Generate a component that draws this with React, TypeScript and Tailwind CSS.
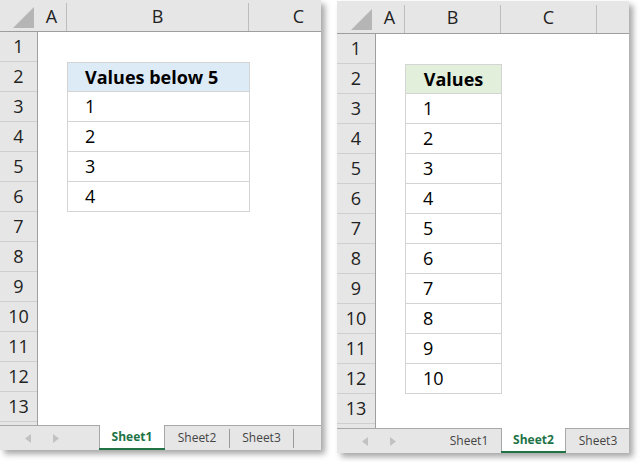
import React from 'react';

type Col = { label: string; w: number };

interface SheetProps {
  width: number;
  height: number;
  cornerW: number;
  headerH: number;
  cols: Col[];
  table: { colIndex: number; header: string; center: boolean; values: string[]; headBg: string };
  leftBarW: number;
  active: number;
  tabWidths: number[];
  leadSeparator: boolean;
  className?: string;
}

const font = { fontFamily: '"Open Sans", "Noto Sans", sans-serif' };

function Triangle({ dir }: { dir: 'l' | 'r' }) {
  return (
    <svg width="6" height="9" viewBox="0 0 6 9">
      {dir === 'l' ? <polygon points="6,0 6,9 0,4.5" fill="#c2c2c2" /> : <polygon points="0,0 0,9 6,4.5" fill="#c2c2c2" />}
    </svg>
  );
}

function Sheet({ width, height, cornerW, headerH, cols, table, leftBarW, active, tabWidths, leadSeparator, className }: SheetProps) {
  const rows = Array.from({ length: 13 }, (_, i) => i + 1);
  const offsetBefore = cols.slice(0, table.colIndex).reduce((s, c) => s + c.w, 0);
  const tableW = cols[table.colIndex].w;

  return (
    <div
      className={`flex flex-col shrink-0 bg-white overflow-hidden shadow-[4px_4px_6px_rgba(0,0,0,0.35)] ${className ?? ''}`}
      style={{ width, height, ...font }}
    >
      {/* column header */}
      <div className="flex shrink-0 bg-[#e6e6e6] border-b border-[#9e9e9e]" style={{ height: headerH }}>
        <div className="shrink-0 flex items-end justify-end pr-[3px] pb-[3px]" style={{ width: cornerW }}>
          <svg width="21" height="21" viewBox="0 0 21 21">
            <polygon points="21,0 21,21 0,21" fill="#b5b5b5" />
          </svg>
        </div>
        <div className="w-px self-end h-[28px] bg-[#a8a8a8]" />
        {cols.map((c) => (
          <React.Fragment key={c.label}>
            <div className="shrink-0 flex items-center justify-center text-[18px] text-[#222] pt-[1px]" style={{ width: c.w - 1 }}>
              {c.label}
            </div>
            <div className="w-px shrink-0 self-end h-[28px] bg-[#bdbdbd]" />
          </React.Fragment>
        ))}
      </div>

      {/* body */}
      <div className="flex flex-1 min-h-0">
        <div className="shrink-0 bg-[#e6e6e6] border-r border-[#9e9e9e] flex flex-col" style={{ width: cornerW + 1 }}>
          {rows.map((r) => (
            <div key={r} className="h-[30px] shrink-0 flex items-center justify-center text-[18px] text-[#222] border-b border-[#cfcfcf]">
              {r}
            </div>
          ))}
        </div>
        <div className="flex-1 flex flex-col">
          {rows.map((r) => {
            const idx = r - 2;
            const inTable = idx >= 0 && idx <= table.values.length;
            return (
              <div key={r} className="h-[30px] shrink-0 flex">
                <div className="shrink-0" style={{ width: offsetBefore }} />
                {inTable && (
                  <div
                    className={`shrink-0 flex items-center border-x border-[#d4d4d4] ${idx === 0 ? 'border-t font-bold' : ''} border-b text-[18px] text-black ${
                      idx === 0 && table.center ? 'justify-center' : 'pl-[17px]'
                    }`}
                    style={{ width: tableW + 1, backgroundColor: idx === 0 ? table.headBg : '#ffffff', marginLeft: -1 }}
                  >
                    {idx === 0 ? table.header : table.values[idx - 1]}
                  </div>
                )}
              </div>
            );
          })}
        </div>
      </div>

      {/* sheet tabs */}
      <div className="flex shrink-0 h-[25px] bg-[#e6e6e6] border-t border-[#a8a8a8] text-[12px]">
        <div className="shrink-0 flex items-center gap-[22px] pl-[25px]" style={{ width: leftBarW }}>
          <Triangle dir="l" />
          <Triangle dir="r" />
        </div>
        {leadSeparator && <div className="w-px h-[19px] mt-[3px] bg-[#9a9a9a]" />}
        {tabWidths.map((w, i) => {
          const isActive = i === active;
          const nextActive = i + 1 === active;
          return (
            <React.Fragment key={i}>
              {isActive ? (
                <div className="shrink-0 -mt-px bg-white border-x border-[#a8a8a8] flex flex-col" style={{ width: w }}>
                  <div className="flex-1 flex items-center justify-center font-bold text-[#217346]">Sheet{i + 1}</div>
                  <div className="h-[2px] mx-[-1px] bg-[#217346]" />
                </div>
              ) : (
                <div className="shrink-0 flex items-center justify-center text-[#444]" style={{ width: w }}>
                  Sheet{i + 1}
                </div>
              )}
              {!isActive && !nextActive && <div className="w-px shrink-0 h-[19px] mt-[3px] bg-[#9a9a9a]" />}
            </React.Fragment>
          );
        })}
      </div>
    </div>
  );
}

export default function App() {
  return (
    <div className="w-[640px] h-[462px] bg-white flex items-start overflow-hidden">
      <Sheet
        width={321}
        height={450}
        cornerW={37}
        headerH={32}
        cols={[
          { label: 'A', w: 30 },
          { label: 'B', w: 182 },
          { label: 'C', w: 100 },
        ]}
        table={{ colIndex: 1, header: 'Values below 5', center: false, values: ['1', '2', '3', '4'], headBg: '#ddebf7' }}
        leftBarW={99}
        active={0}
        tabWidths={[66, 64, 63]}
        leadSeparator={false}
      />
      <Sheet
        className="ml-[16px] mt-px"
        width={292}
        height={452}
        cornerW={38}
        headerH={33}
        cols={[
          { label: 'A', w: 30 },
          { label: 'B', w: 96 },
          { label: 'C', w: 96 },
          { label: '', w: 40 },
        ]}
        table={{
          colIndex: 1,
          header: 'Values',
          center: true,
          values: ['1', '2', '3', '4', '5', '6', '7', '8', '9', '10'],
          headBg: '#e2efda',
        }}
        leftBarW={100}
        active={1}
        tabWidths={[64, 65, 64]}
        leadSeparator={true}
      />
    </div>
  );
}
